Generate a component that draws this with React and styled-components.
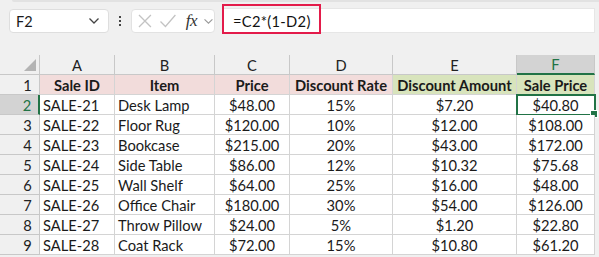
import styled, { createGlobalStyle } from "styled-components";

const GlobalStyle = createGlobalStyle`
    html, body {
        margin: 0;
        padding: 0;
        background: #f0f0f0;
    }
    body {
        font-family: Lato, "Liberation Sans", sans-serif;
        color: #1a1a1a;
    }
`;

const columns = [
    { letter: "A", width: 75, title: "Sale ID", tint: "pink", align: "left" },
    { letter: "B", width: 100, title: "Item", tint: "pink", align: "left" },
    { letter: "C", width: 75, title: "Price", tint: "pink", align: "center" },
    { letter: "D", width: 103, title: "Discount Rate", tint: "pink", align: "center" },
    { letter: "E", width: 124, title: "Discount Amount", tint: "green", align: "center" },
    { letter: "F", width: 78, title: "Sale Price", tint: "green", align: "center" },
];

const rows = [
    ["SALE-21", "Desk Lamp", "$48.00", "15%", "$7.20", "$40.80"],
    ["SALE-22", "Floor Rug", "$120.00", "10%", "$12.00", "$108.00"],
    ["SALE-23", "Bookcase", "$215.00", "20%", "$43.00", "$172.00"],
    ["SALE-24", "Side Table", "$86.00", "12%", "$10.32", "$75.68"],
    ["SALE-25", "Wall Shelf", "$64.00", "25%", "$16.00", "$48.00"],
    ["SALE-26", "Office Chair", "$180.00", "30%", "$54.00", "$126.00"],
    ["SALE-27", "Throw Pillow", "$24.00", "5%", "$1.20", "$22.80"],
    ["SALE-28", "Coat Rack", "$72.00", "15%", "$10.80", "$61.20"],
];

const tints = {
    pink: "#f2dcdb",
    green: "#d8e4bc",
};

const App = () => {
    return (
        <Page>
            <GlobalStyle />
            <TopEdge />
            <Toolbar>
                <NameBox>
                    <span>F2</span>
                    <Chevron width="12" height="8" viewBox="0 0 12 8">
                        <path d="M1.5 1.5 L6 6 L10.5 1.5" />
                    </Chevron>
                </NameBox>
                <Dots>
                    <i /><i /><i />
                </Dots>
                <FormulaButtons>
                    <svg width="16" height="16" viewBox="0 0 16 16">
                        <path d="M2 2 L14 14 M14 2 L2 14" stroke="#c3c3c3" strokeWidth="1.3" fill="none" />
                    </svg>
                    <svg width="18" height="16" viewBox="0 0 18 16">
                        <path d="M1.5 8.5 L6.5 13.5 L16.5 2" stroke="#c3c3c3" strokeWidth="1.3" fill="none" />
                    </svg>
                    <Fx>fx</Fx>
                    <Chevron width="11" height="7" viewBox="0 0 12 8" $light>
                        <path d="M1.5 1.5 L6 6 L10.5 1.5" />
                    </Chevron>
                </FormulaButtons>
                <FormulaBar>
                    <Highlight />
                    <FormulaText>=C2*(1-D2)</FormulaText>
                </FormulaBar>
            </Toolbar>

            <Sheet>
                <Grid>
                    <Corner><Triangle /></Corner>
                    {columns.map(col => (
                        <ColHeader key={col.letter} $active={col.letter === "F"}>
                            {col.letter}
                        </ColHeader>
                    ))}

                    <RowHeader>1</RowHeader>
                    {columns.map(col => (
                        <TitleCell key={col.title} $tint={tints[col.tint]}>
                            {col.title}
                        </TitleCell>
                    ))}

                    {rows.map((row, r) => (
                        <Row key={row[0]}>
                            <RowHeader $active={r === 0}>{r + 2}</RowHeader>
                            {row.map((value, c) => (
                                <Cell key={c} $align={columns[c].align}>
                                    {value}
                                    {r === 0 && c === 5 && <Selection><Handle /></Selection>}
                                </Cell>
                            ))}
                        </Row>
                    ))}
                </Grid>
            </Sheet>
        </Page>
    );
};

export default App;

const Page = styled.div`
    width: 599px;
    height: 257px;
    overflow: hidden;
    background: #f0f0f0;
    position: relative;
`;

const TopEdge = styled.div`
    height: 2px;
    margin-left: 12px;
    background: #e2e2e2;
    border-bottom-left-radius: 3px;
`;

const Toolbar = styled.div`
    display: flex;
    align-items: center;
    height: 31px;
    padding: 0 4px 0 9px;
    margin-top: 6px;
    margin-bottom: 16px;
    gap: 0;
`;

const NameBox = styled.div`
    box-sizing: border-box;
    width: 100px;
    height: 24px;
    align-self: flex-start;
    margin-top: 1px;
    background: #fff;
    border: 1px solid #dedede;
    border-radius: 4px;
    display: flex;
    align-items: center;
    justify-content: space-between;
    padding: 0 8px 0 6px;
    font-size: 14.5px;
    color: #1a1a1a;
`;

const Chevron = styled.svg`
    fill: none;
    stroke: ${p => (p.$light ? "#9a9a9a" : "#444")};
    stroke-width: 1.3;
`;

const Dots = styled.div`
    width: 22px;
    display: flex;
    flex-direction: column;
    align-items: center;
    gap: 2px;
    align-self: flex-start;
    margin-top: 8px;

    i {
        display: block;
        width: 2px;
        height: 2px;
        background: #444;
    }
`;

const FormulaButtons = styled.div`
    box-sizing: border-box;
    width: 84px;
    height: 24px;
    align-self: flex-start;
    margin-top: 1px;
    background: #fff;
    border: 1px solid #e2e2e2;
    border-radius: 4px;
    display: flex;
    align-items: center;
    gap: 6px;
    padding: 0 0 0 5px;
`;

const Fx = styled.span`
    font-family: "Liberation Serif", serif;
    font-style: italic;
    font-size: 17px;
    color: #333;
    margin-left: 3px;
    letter-spacing: -0.5px;
`;

const FormulaBar = styled.div`
    position: relative;
    box-sizing: border-box;
    margin-left: 7px;
    flex: 1;
    height: 25px;
    align-self: flex-start;
    background: #fff;
    border: 1px solid #e6e6e6;
    display: flex;
    align-items: center;
    padding-left: 10px;
`;

const Highlight = styled.div`
    position: absolute;
    left: -1px;
    top: -5px;
    width: 99px;
    height: 30px;
    box-sizing: border-box;
    border: 2px solid #e31b4a;
    pointer-events: none;
`;

const FormulaText = styled.span`
    font-size: 14.7px;
    color: #111;
    letter-spacing: 0.3px;
`;

const Sheet = styled.div`
    position: relative;
`;

const Grid = styled.div`
    display: grid;
    grid-template-columns: 40px ${columns.map(c => `${c.width}px`).join(" ")};
    grid-auto-rows: 20px;
    width: 595px;
    background: #fff;
`;

const Row = styled.div`
    display: contents;
`;

const Corner = styled.div`
    position: relative;
    background: #f0f0f0;
    border-right: 1px solid #c8c8c8;
    border-bottom: 1px solid #c8c8c8;
    box-sizing: border-box;
`;

const Triangle = styled.div`
    position: absolute;
    right: 3px;
    bottom: 3px;
    width: 0;
    height: 0;
    border-left: 12px solid transparent;
    border-bottom: 12px solid #b4b4b4;
`;

const ColHeader = styled.div`
    box-sizing: border-box;
    display: flex;
    align-items: center;
    justify-content: center;
    font-size: 14.7px;
    background: ${p => (p.$active ? "#d3d3d3" : "#f0f0f0")};
    color: ${p => (p.$active ? "#217346" : "#222")};
    border-right: 1px solid #c8c8c8;
    border-bottom: ${p => (p.$active ? "2px solid #217346" : "1px solid #c8c8c8")};
`;

const RowHeader = styled.div`
    box-sizing: border-box;
    display: flex;
    align-items: center;
    justify-content: center;
    padding-left: 16px;
    font-size: 14.7px;
    background: ${p => (p.$active ? "#d3d3d3" : "#f0f0f0")};
    color: ${p => (p.$active ? "#217346" : "#222")};
    border-right: ${p => (p.$active ? "2px solid #217346" : "1px solid #c8c8c8")};
    border-bottom: 1px solid #c8c8c8;
`;

const TitleCell = styled.div`
    box-sizing: border-box;
    display: flex;
    align-items: center;
    justify-content: center;
    font-size: 14.7px;
    font-weight: 700;
    white-space: nowrap;
    background: ${p => p.$tint};
    border-right: 1px solid #d4d4d4;
    border-bottom: 1px solid #d4d4d4;
`;

const Cell = styled.div`
    position: relative;
    box-sizing: border-box;
    display: flex;
    align-items: center;
    justify-content: ${p => (p.$align === "left" ? "flex-start" : "center")};
    padding: 0 3px;
    font-size: 14.7px;
    white-space: nowrap;
    background: #fff;
    border-right: 1px solid #d4d4d4;
    border-bottom: 1px solid #d4d4d4;
`;

const Selection = styled.div`
    position: absolute;
    left: -1px;
    top: -1px;
    right: -2px;
    bottom: -2px;
    border: 2px solid #217346;
    pointer-events: none;
`;

const Handle = styled.div`
    position: absolute;
    right: -4px;
    bottom: -4px;
    width: 6px;
    height: 6px;
    background: #217346;
    border: 1px solid #fff;
`;
